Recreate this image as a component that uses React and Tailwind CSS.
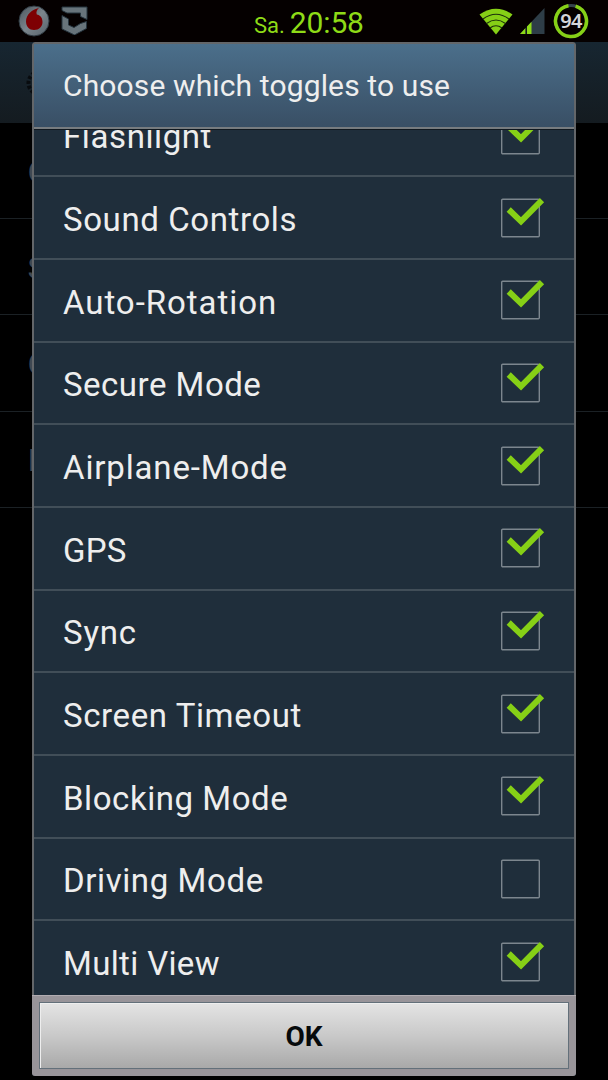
import React, { useState } from "react";

const initialToggles = [
  { label: "Flashlight", checked: true, spacing: "tracking-[0.6px]" },
  { label: "Sound Controls", checked: true, spacing: "tracking-[0.6px]" },
  { label: "Auto-Rotation", checked: true, spacing: "tracking-[0.95px]" },
  { label: "Secure Mode", checked: true, spacing: "tracking-[0.5px]" },
  { label: "Airplane-Mode", checked: true, spacing: "tracking-[0.85px]" },
  { label: "GPS", checked: true, spacing: "tracking-[0.2px]" },
  { label: "Sync", checked: true, spacing: "tracking-[0.8px]" },
  { label: "Screen Timeout", checked: true, spacing: "tracking-[0.6px]" },
  { label: "Blocking Mode", checked: true, spacing: "tracking-[0.55px]" },
  { label: "Driving Mode", checked: false, spacing: "tracking-[0.6px]" },
  { label: "Multi View", checked: true, spacing: "tracking-[0.35px]" },
];

function VodafoneIcon() {
  return (
    <svg width="32" height="32" viewBox="0 0 32 32">
      <defs>
        <linearGradient id="ring" x1="0" y1="0" x2="1" y2="1">
          <stop offset="0" stopColor="#4b555c" />
          <stop offset="0.5" stopColor="#7b858c" />
          <stop offset="1" stopColor="#566169" />
        </linearGradient>
      </defs>
      <circle cx="16" cy="16" r="15" fill="url(#ring)" stroke="#2f3a42" strokeWidth="1" />
      <path
        d="M21 3C14 4.500 8 9.500 8 16.500C8 21.500 11.500 25 16 25C21 25 24.500 21.500 24.500 17C24.500 12.500 22 10 18.800 9.500C17.800 7 19 4.500 21 3Z"
        fill="#7e0003"
      />
    </svg>
  );
}

function ShieldIcon() {
  return (
    <svg width="28" height="30" viewBox="0 0 28 30">
      <g fill="#68747b" stroke="#26343e" strokeWidth="1">
        <path d="M1 2H26V14.500L19.500 11.500V8H6L1 5.500Z" />
        <path d="M1 10.500L7.500 14V20L13 22.500L19.500 18.500L25.500 16.500V23.500L13.500 30L1 24Z" />
      </g>
    </svg>
  );
}

function WifiIcon() {
  return (
    <svg width="34" height="27" viewBox="0 0 34 27">
      <path d="M0.500 6.500Q17 -5 33.500 6.500L17 26.500Z" fill="#86d016" />
      <g fill="none" stroke="#1c300c" strokeWidth="1.200">
        <path d="M4 11Q17 1.500 30 11" />
        <path d="M7.500 15.500Q17 8.500 26.500 15.500" />
        <path d="M11 20Q17 15.500 23 20" />
      </g>
    </svg>
  );
}

function SignalIcon() {
  return (
    <svg width="25" height="27" viewBox="0 0 25 27">
      <path d="M0 26L24.500 0V26Z" fill="#2e3d47" />
      <path d="M0 26L5.500 20V26ZM7 26V18.500L11.500 13.700V26Z" fill="#8edb17" />
      <path d="M6.200 19V26" stroke="#07090c" strokeWidth="1" />
    </svg>
  );
}

function BatteryIcon() {
  return (
    <div className="grid h-[36px] w-[36px] place-items-center">
      <svg className="col-start-1 row-start-1" width="36" height="36" viewBox="0 0 36 36">
        <circle cx="18" cy="18" r="15.500" fill="none" stroke="#35434c" strokeWidth="3" />
        <path
          d="M22.600 3.200A15.500 15.500 0 1 1 15.500 2.700"
          fill="none"
          stroke="#86d016"
          strokeWidth="3.500"
        />
      </svg>
      <span className="col-start-1 row-start-1 font-['Noto_Sans',sans-serif] text-[20px] leading-none font-semibold tracking-[-0.8px] text-[#d4d6d9]">
        94
      </span>
    </div>
  );
}

function StatusBar() {
  return (
    <div className="flex h-[42px] items-start bg-[#050000]">
      <div className="flex w-[254px] items-start gap-[11px] pt-[5px] pl-[18px]">
        <VodafoneIcon />
        <ShieldIcon />
      </div>
      <div className="flex flex-1 items-baseline gap-[5px] whitespace-nowrap text-[#8edb17]">
        <span className="text-[22px] leading-[45px]">Sa.</span>
        <span className="text-[30px] leading-[45px] tracking-[-0.15px]">20:58</span>
      </div>
      <div className="flex items-start pr-[19px]">
        <div className="pt-[8px] pr-[7px]">
          <WifiIcon />
        </div>
        <div className="pt-[8px] pr-[8px]">
          <SignalIcon />
        </div>
        <div className="pt-[3px]">
          <BatteryIcon />
        </div>
      </div>
    </div>
  );
}

// Dimmed settings screen that stays visible around the dialog
function Backdrop() {
  return (
    <div className="text-[32px] text-[#3f4852]">
      <div className="flex h-[81px] items-center bg-linear-to-b from-[#172631] to-[#141b20] pl-[26px]">
        <svg width="28" height="28" viewBox="0 0 28 28">
          <circle cx="14" cy="14" r="11.500" fill="none" stroke="#080b0e" strokeWidth="4" strokeDasharray="3 2" />
        </svg>
      </div>
      {["G", "S", "G", "I"].map((letter, i) => (
        <div
          key={i}
          className="flex h-[96.200px] items-center border-b border-[#1b2125] pt-[2px] pl-[27.500px]"
        >
          {letter}
        </div>
      ))}
    </div>
  );
}

function Checkbox({ checked }) {
  return (
    <svg width="44" height="42" viewBox="0 0 44 42">
      <rect x="0.700" y="2.200" width="37.600" height="37.600" rx="1" fill="none" stroke="#7c868e" strokeWidth="1.400" />
      {checked && (
        <path d="M7.700 12.500L20 24.300L41 3.200" fill="none" stroke="#86d016" strokeWidth="6" />
      )}
    </svg>
  );
}

export default function App() {
  const [toggles, setToggles] = useState(initialToggles);

  const toggle = (index) => {
    setToggles(
      toggles.map((t, i) => (i === index ? { ...t, checked: !t.checked } : t))
    );
  };

  return (
    <div className="relative h-[1080px] w-[608px] overflow-hidden bg-black font-[Roboto,sans-serif]">
      <StatusBar />
      <Backdrop />

      {/* Dialog */}
      <div className="absolute top-[42px] left-[32px] flex h-[1034px] w-[544px] flex-col overflow-hidden rounded-[3px] bg-[#1f2e3b]">
        <div className="flex min-h-0 flex-1 flex-col rounded-t-[3px] border-x-2 border-t-2 border-[#636669]">
          <div className="h-[85px] shrink-0 border-b-2 border-[#777c80] bg-linear-to-b from-[#4b6f8b] to-[#394f65] pl-[29px] text-[30px] leading-[84px] tracking-[0.13px] whitespace-nowrap text-[#eeeeee]">
            Choose which toggles to use
          </div>

          {/* Scrolled list, the first row is partly under the title */}
          <div className="flex min-h-0 flex-1 flex-col overflow-hidden border-t border-[#101820]">
            <div className="-mt-[35.500px]">
              {toggles.map((t, i) => (
                <div
                  key={t.label}
                  onClick={() => toggle(i)}
                  className="flex h-[82.680px] items-center justify-between border-b-2 border-[#414e58] pr-[29px] pl-[29px]"
                >
                  <span className={"pt-[5px] text-[33px] leading-[40px] text-[#eeeeee] " + t.spacing}>
                    {t.label}
                  </span>
                  <Checkbox checked={t.checked} />
                </div>
              ))}
            </div>
          </div>
        </div>

        {/* Button bar */}
        <div className="h-[81px] shrink-0 border-t border-[#b1acb1] bg-[#989499] px-[7px] pt-[6px] pb-[7px]">
          <button className="h-full w-full border border-[#63707a] bg-linear-to-b from-[#e4e4e4] via-[#c9c9c9] to-[#a9a9a9] pt-[2px] text-[28px] font-bold text-[#060a0c] shadow-[inset_1px_1px_0_#eeeeee]">
            OK
          </button>
        </div>
      </div>
    </div>
  );
}
